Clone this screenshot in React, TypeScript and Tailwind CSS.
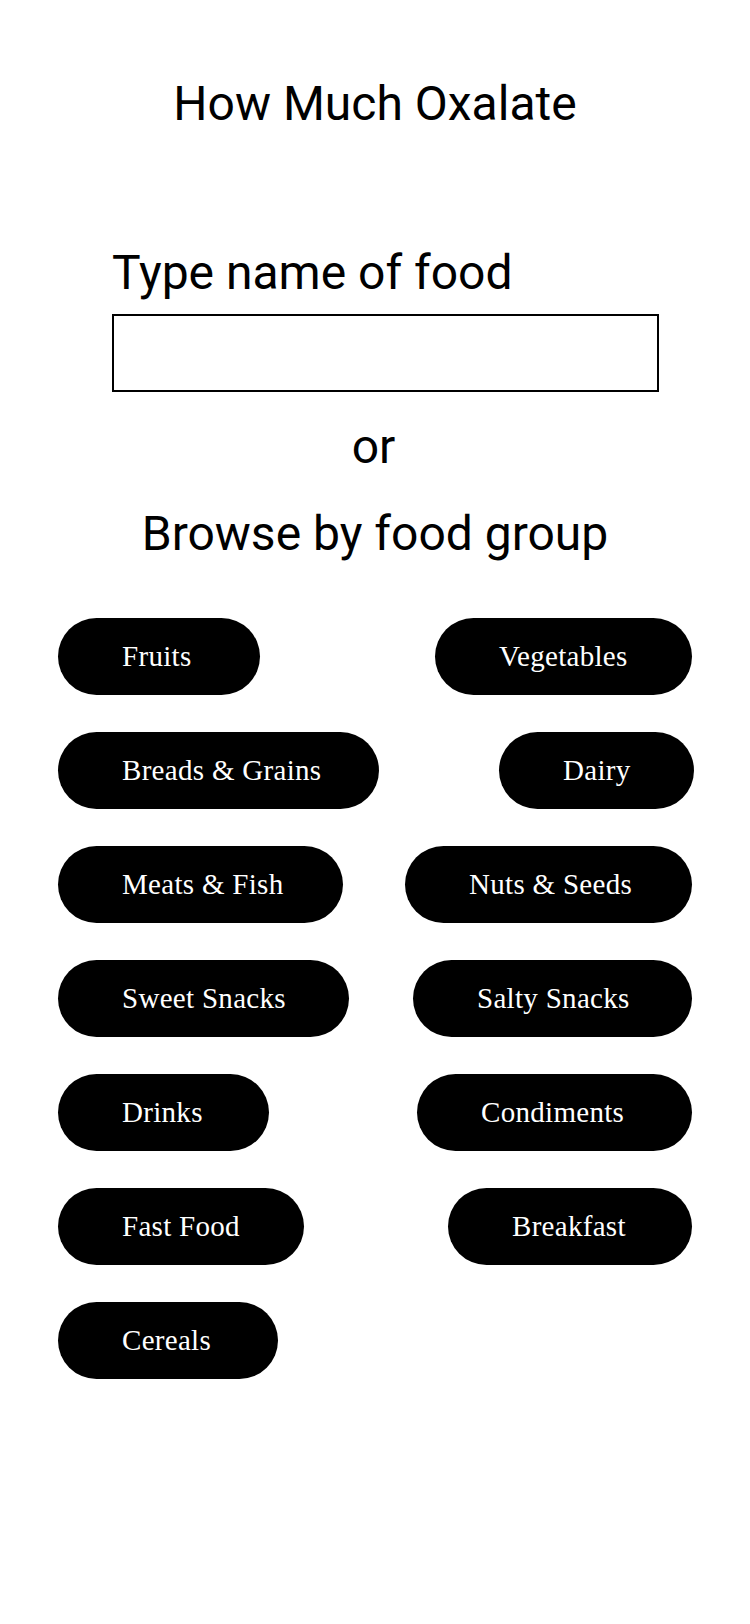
const groups = [
  [
    { label: "Fruits", w: "w-[202px]" },
    { label: "Vegetables", w: "w-[257px]" },
  ],
  [
    { label: "Breads & Grains", w: "w-[321px]" },
    { label: "Dairy", w: "w-[195px] -mr-[2px]" },
  ],
  [
    { label: "Meats & Fish", w: "w-[285px]" },
    { label: "Nuts & Seeds", w: "w-[287px]" },
  ],
  [
    { label: "Sweet Snacks", w: "w-[291px]" },
    { label: "Salty Snacks", w: "w-[279px]" },
  ],
  [
    { label: "Drinks", w: "w-[211px]" },
    { label: "Condiments", w: "w-[275px]" },
  ],
  [
    { label: "Fast Food", w: "w-[246px]" },
    { label: "Breakfast", w: "w-[244px]" },
  ],
  [{ label: "Cereals", w: "w-[220px]" }],
]

function GroupButton({ label, w }: { label: string; w: string }) {
  return (
    <button
      type="button"
      className={`${w} h-[77px] rounded-full bg-black text-white pl-[64px] text-left font-['Liberation_Serif',serif] text-[29px] tracking-[0.3px] leading-none whitespace-nowrap`}
    >
      {label}
    </button>
  )
}

export default function App() {
  return (
    <div className="min-h-[1624px] bg-white text-black font-['Roboto',sans-serif]">
      <div className="pt-[80px] flex flex-col">
        <h1 className="text-center text-[48px] leading-none font-normal">How Much Oxalate</h1>

        {/* Search */}
        <div className="ml-[112px] w-[547px] mt-[121px]">
          <label className="block text-[48px] leading-none">Type name of food</label>
          <input type="text" className="mt-[17px] block w-full h-[78px] border-2 border-black bg-white outline-none" />
        </div>

        <p className="mt-[31px] text-center text-[48px] leading-none pr-[3px]">or</p>
        <p className="mt-[39px] text-center text-[48px] leading-none">Browse by food group</p>

        {/* Food groups */}
        <div className="mt-[60px] px-[58px] flex flex-col gap-[37px]">
          {groups.map((row, i) => (
            <div key={i} className="flex justify-between items-center">
              {row.map((g) => (
                <GroupButton key={g.label} label={g.label} w={g.w} />
              ))}
            </div>
          ))}
        </div>
      </div>
    </div>
  )
}
